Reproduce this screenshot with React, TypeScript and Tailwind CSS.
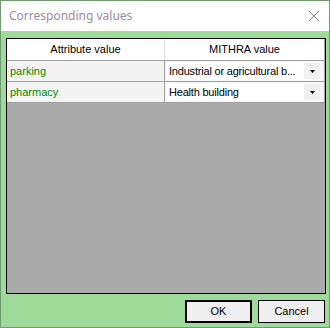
import React from "react";

const Arrow = () => (
  <svg width="5" height="3" viewBox="0 0 5 3">
    <path d="M0 0h5L2.5 3z" fill="#000" />
  </svg>
);

function Row({ attr, value }: { attr: string; value: string }) {
  return (
    <div className="flex h-[21px] border-b border-[#a0a0a0]">
      <div className="w-[158px] shrink-0 bg-[#f4f4f4] border-r border-[#a0a0a0] pl-[3px] flex items-center text-[#008a00]">
        {attr}
      </div>
      <div className="flex-1 bg-[#f4f4f4] flex items-center pl-[1px] pr-[2px] border-r border-[#a0a0a0]">
        <div className="flex-1 h-[18px] bg-white flex items-center">
          <span className="pl-[3px] flex-1 whitespace-nowrap overflow-hidden tracking-[-0.2px]">{value}</span>
          <div className="w-[17px] h-[16px] bg-[#f0f0f0] flex items-center justify-center mr-[1px]">
            <Arrow />
          </div>
        </div>
      </div>
    </div>
  );
}

export default function App() {
  return (
    <div
      className="w-[330px] h-[328px] border border-[#6f9a6f] bg-[#9edb9a] flex flex-col text-[11px] text-black"
      style={{ fontFamily: '"Liberation Sans", Arial, sans-serif' }}
    >
      <div className="h-[30px] bg-white flex items-center justify-between shrink-0">
        <span
          className="pl-[8px] text-[12px] text-[#9a8c9c]"
          style={{ fontFamily: '"Noto Sans", "Open Sans", sans-serif' }}
        >
          Corresponding values
        </span>
        <svg width="12" height="12" viewBox="0 0 12 12" className="mr-[9px]">
          <path d="M1 1L11 11M11 1L1 11" stroke="#8a8a8a" strokeWidth="1" />
        </svg>
      </div>
      <div className="flex-1 flex flex-col pl-[5px] pr-[3px] pt-[7px] pb-[5px]">
        <div className="h-[256px] border border-black bg-[#ababab] flex flex-col">
          <div className="flex h-[22px] bg-white border-b border-[#a0a0a0]">
            <div className="w-[158px] shrink-0 border-r border-[#e3e3e3] flex items-center justify-center">
              Attribute value
            </div>
            <div className="flex-1 flex items-center justify-center border-r border-[#a0a0a0]">
              MITHRA value
            </div>
          </div>
          <Row attr="parking" value="Industrial or agricultural b..." />
          <Row attr="pharmacy" value="Health building" />
        </div>
        <div className="flex justify-end gap-[6px] mt-[6px] pr-[1px]">
          <button className="w-[67px] h-[23px] bg-[#efefef] border-2 border-black text-[11px]">
            OK
          </button>
          <button className="w-[67px] h-[23px] bg-[#efefef] border border-black text-[11px]">
            Cancel
          </button>
        </div>
      </div>
    </div>
  );
}
